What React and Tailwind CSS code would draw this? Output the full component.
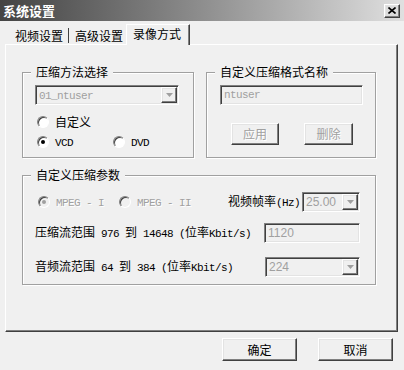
const sunken =
  "border border-t-[#808080] border-l-[#808080] border-r-white border-b-white shadow-[inset_1px_1px_0_#404040,inset_-1px_-1px_0_#e3e3e3]";
const raised =
  "border border-t-white border-l-white border-r-[#404040] border-b-[#404040] shadow-[inset_-1px_-1px_0_#808080,inset_1px_1px_0_#e3e3e3]";

// SimSun-ish half width latin text
const M = ({ children }) => (
  <span className="font-['Liberation_Mono',monospace] text-[11px] tracking-[-0.6px]">{children}</span>
);

const Arrow = () => (
  <svg width="7" height="4" viewBox="0 0 7 4">
    <path d="M0 0h7L3.5 4z" fill="#a0a0a0" />
  </svg>
);

const Combo = ({ value, className, mono }) => (
  <div className={`${sunken} ${className} h-[20px] bg-[#f0f0f0] flex items-center p-[1px]`}>
    <div
      className={`flex-1 pl-[2px] text-[#a0a0a0] ${
        mono ? "" : "font-['Liberation_Sans',sans-serif] text-[12px]"
      }`}
    >
      {mono ? <M>{value}</M> : value}
    </div>
    <div className={`${raised} w-[16px] h-full bg-[#f0f0f0] flex items-center justify-center`}>
      <Arrow />
    </div>
  </div>
);

const Field = ({ value, className, mono }) => (
  <div className={`${sunken} ${className} h-[20px] bg-[#f0f0f0] flex items-center pl-[3px] text-[#a0a0a0]`}>
    {mono ? <M>{value}</M> : <span className="font-['Liberation_Sans',sans-serif]">{value}</span>}
  </div>
);

const Radio = ({ checked, disabled, children, className = "" }) => (
  <div className={`flex items-center gap-[6px] h-[14px] ${className}`}>
    <span
      className={`w-[12px] h-[12px] rounded-full border border-t-[#808080] border-l-[#808080] border-r-white border-b-white shadow-[inset_1px_1px_0_#404040] flex items-center justify-center ${
        disabled ? "bg-[#f0f0f0]" : "bg-white"
      }`}
    >
      {checked && (
        <span className={`w-[4px] h-[4px] rounded-full ${disabled ? "bg-[#a0a0a0]" : "bg-black"}`} />
      )}
    </span>
    <span className={disabled ? "text-[#a0a0a0] [text-shadow:1px_1px_0_#fff]" : ""}>{children}</span>
  </div>
);

const Button = ({ children, disabled, className }) => (
  <div
    className={`${raised} ${className} bg-[#f0f0f0] flex items-center justify-center ${
      disabled ? "text-[#a0a0a0] [text-shadow:1px_1px_0_#fff]" : ""
    }`}
  >
    {children}
  </div>
);

const Group = ({ title, className, children }) => (
  <fieldset
    className={`${className} border border-[#a0a0a0] shadow-[1px_1px_0_#fff,inset_1px_1px_0_#fff]`}
  >
    <legend className="ml-[8px] px-[5px] bg-[#f0f0f0] leading-[14px]">{title}</legend>
    {children}
  </fieldset>
);

export default function App() {
  return (
    <div className="w-[404px] h-[370px] overflow-hidden bg-[#f0f0f0] text-black text-[12px] leading-[14px] font-['Noto_Sans_CJK_SC',sans-serif]">
      {/* title bar */}
      <div className="h-[21px] flex items-center justify-between pl-[3px] pr-[4px] bg-linear-to-r from-[#444444] to-[#e0e0e0]">
        <span className="text-white font-bold text-[13px]">系统设置</span>
        <div className={`${raised} w-[16px] h-[14px] bg-[#dcdcdc] flex items-center justify-center`}>
          <svg width="8" height="7" viewBox="0 0 8 7">
            <path d="M0.5 0.5L7.5 6.5M7.5 0.5L0.5 6.5" stroke="#000" strokeWidth="1.6" />
          </svg>
        </div>
      </div>

      {/* tabs */}
      <div className="h-[23px] flex items-end pl-[8px]">
        <div className="h-[15px] pl-[7px] pr-[5px] border-r border-[#404040] flex items-center mb-[1px]">视频设置</div>
        <div className="h-[15px] pl-[6px] w-[57px] flex items-center mb-[1px]">高级设置</div>
        <div className="relative z-10 -mb-px h-[21px] w-[64px] pl-[6px] pb-[3px] flex items-center bg-[#f0f0f0] border-t border-l border-white border-r border-r-[#404040] shadow-[inset_-1px_0_0_#808080]">
          录像方式
        </div>
      </div>

      {/* tab page */}
      <div className="ml-[5px] w-[393px] h-[288px] border border-t-white border-l-white border-r-[#404040] border-b-[#404040] shadow-[inset_-1px_-1px_0_#808080] pt-[20px] pl-[16px]">
        <div className="flex gap-[12px]">
          <Group title="压缩方法选择" className="w-[172px] h-[93px]">
            <div className="pl-[12px]">
              <Combo value="01_ntuser" mono className="w-[144px] mt-[6px]" />
              <Radio className="ml-[2px] mt-[10px]">自定义</Radio>
              <div className="flex ml-[2px] mt-[6px]">
                <Radio checked className="w-[76px]">
                  <M>VCD</M>
                </Radio>
                <Radio>
                  <M>DVD</M>
                </Radio>
              </div>
            </div>
          </Group>
          <Group title="自定义压缩格式名称" className="w-[170px] h-[93px]">
            <div className="pl-[13px]">
              <Field value="ntuser" mono className="w-[143px] mt-[6px]" />
              <div className="flex gap-[25px] pl-[11px] mt-[18px]">
                <Button disabled className="w-[48px] h-[22px]">应用</Button>
                <Button disabled className="w-[49px] h-[22px]">删除</Button>
              </div>
            </div>
          </Group>
        </div>

        <Group title="自定义压缩参数" className="w-[354px] h-[117px] mt-[10px]">
          <div className="pl-[12px] pr-[15px]">
            <div className="flex items-center h-[20px] mt-[10px]">
              <Radio checked disabled className="ml-[3px] w-[81px]">
                <M>MPEG - I</M>
              </Radio>
              <Radio disabled>
                <M>MPEG - II</M>
              </Radio>
              <span className="ml-auto mr-[2px]">
                视频帧率<M>(Hz)</M>
              </span>
              <Combo value="25.00" className="w-[58px]" />
            </div>
            <div className="flex items-center justify-between h-[20px] mt-[11px]">
              <span>
                压缩流范围<M> 976 </M>到<M> 14648 (</M>位率<M>Kbit/s)</M>
              </span>
              <Field value="1120" className="w-[96px]" />
            </div>
            <div className="flex items-center justify-between h-[20px] mt-[14px]">
              <span>
                音频流范围<M> 64 </M>到<M> 384 (</M>位率<M>Kbit/s)</M>
              </span>
              <Combo value="224" className="w-[95px]" />
            </div>
          </div>
        </Group>
      </div>

      {/* dialog buttons */}
      <div className="flex justify-end gap-[21px] pr-[11px] mt-[6px]">
        <Button className="w-[75px] h-[23px]">确定</Button>
        <Button className="w-[75px] h-[23px]">取消</Button>
      </div>
    </div>
  );
}
